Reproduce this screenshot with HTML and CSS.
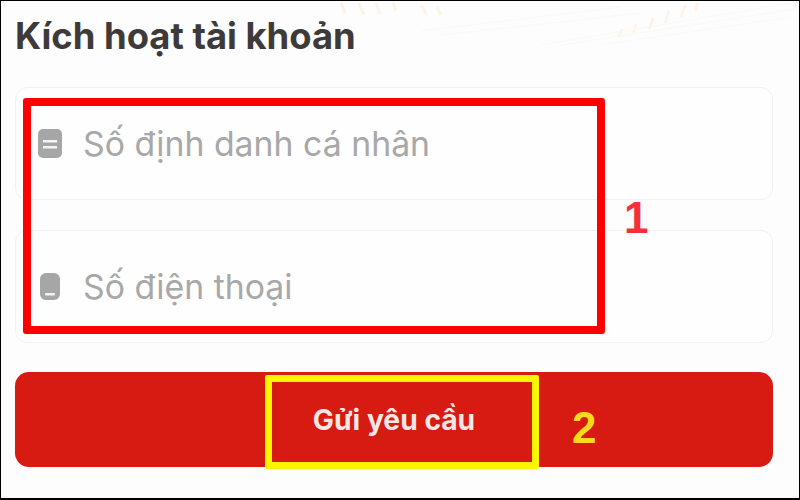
FILE: index.html
```html
<!DOCTYPE html>
<html>
  <head>
    <meta charset="UTF-8" />
    <title>Kích hoạt tài khoản</title>
    <link rel="stylesheet" href="styles.css">
  </head>
  <body>
    <div class="screen">
      <!-- faint rays behind the heading -->
      <svg class="rays" width="800" height="60" viewBox="0 0 800 60">
        <g fill="none" stroke="#fdf3e8" stroke-width="3">
          <path d="M340 2l4 10M358 2l5 12M375 2l4 11M392 2l3 8M420 4l5 9M436 6l4 8"/>
          <path d="M618 36l3-8M632 32l3-9M648 28l4-11M664 22l4-12M680 16l4-12M694 10l3-8"/>
        </g>
        <g fill="none" stroke="#fbf9f6" stroke-width="1">
          <path d="M420 30L620 6M440 34L640 12M540 44L790 2M560 44L795 8M600 44L790 16"/>
        </g>
      </svg>

      <h1 class="title">Kích hoạt tài khoản</h1>

      <div class="field">
        <svg class="field-icon" width="24" height="29" viewBox="0 0 24 29">
          <rect width="24" height="29" rx="5" fill="#a6a6a6"/>
          <rect x="5" y="11" width="14" height="2.5" fill="#f4f4f4"/>
          <rect x="5" y="17" width="14" height="2.5" fill="#f4f4f4"/>
        </svg>
        <span class="placeholder">Số định danh cá nhân</span>
      </div>

      <div class="field">
        <svg class="field-icon" width="24" height="27" viewBox="0 0 24 27">
          <rect x="2" width="20" height="27" rx="6" fill="#a6a6a6"/>
          <rect x="7" y="20" width="10" height="2.5" rx="1" fill="#f4f4f4"/>
        </svg>
        <span class="placeholder">Số điện thoại</span>
      </div>

      <button class="submit">Gửi yêu cầu</button>

      <div class="mark mark-red"></div>
      <div class="mark mark-yellow"></div>
      <span class="num num-1">1</span>
      <span class="num num-2">2</span>
    </div>
  </body>
</html>
```

FILE: styles.css
```css
html, body {
    margin: 0;
    padding: 0;
    height: 100%;
}

.screen {
    position: relative;
    box-sizing: border-box;
    width: 800px;
    height: 500px;
    padding: 14px 26px 0 14px;
    background-color: #fdfdfd;
    border: 1px solid #000;
    border-bottom-width: 2px;
    font-family: Inter, "Liberation Sans", sans-serif;
    overflow: hidden;
}

.rays {
    position: absolute;
    top: 0;
    left: 0;
}

.title {
    position: relative;
    margin: 0 0 30px 0;
    font-size: 36.4px;
    line-height: 42px;
    font-weight: 650;
    color: #3f3a3a;
}

.field {
    box-sizing: border-box;
    display: flex;
    align-items: center;
    height: 113px;
    margin-bottom: 30px;
    padding: 0 0 0 22px;
    background-color: #fefefe;
    border: 1px solid #f1f1f1;
    border-radius: 12px;
}

.field-icon {
    flex: none;
}

.placeholder {
    margin-left: 21px;
    font-size: 33.8px;
    color: #a8a8a8;
}

.submit {
    display: block;
    width: 100%;
    height: 95px;
    margin-top: -1px;
    background-color: #d71a12;
    border: none;
    border-radius: 14px;
    font-family: inherit;
    font-size: 28.2px;
    font-weight: 700;
    color: #f8e6e4;
}

/* annotations drawn over the screenshot */
.mark {
    position: absolute;
    box-sizing: border-box;
}

.mark-red {
    left: 22px;
    top: 97px;
    width: 582px;
    height: 236px;
    border: 8px solid #fe0000;
    border-radius: 3px;
}

.mark-yellow {
    left: 264px;
    top: 374px;
    width: 274px;
    height: 94px;
    border: 7px solid #fdf500;
    border-radius: 2px;
}

.num {
    position: absolute;
    font-family: "Liberation Sans", sans-serif;
    font-size: 44px;
    font-weight: 700;
    line-height: 44px;
}

.num-1 {
    left: 623px;
    top: 195px;
    color: #f5303a;
}

.num-2 {
    left: 571px;
    top: 405px;
    color: #fdd91c;
}
```
